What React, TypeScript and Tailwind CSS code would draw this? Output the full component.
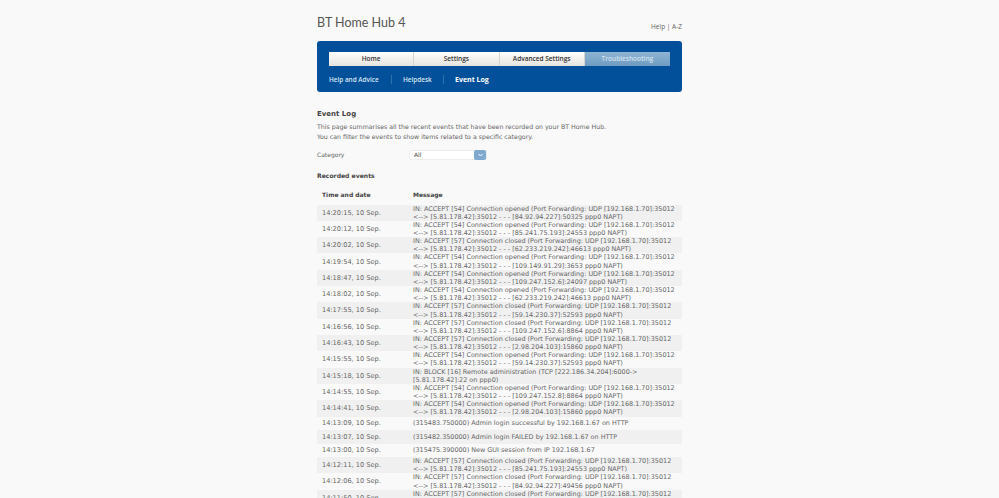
const FWD = "(Port Forwarding: UDP [192.168.1.70]:35012";

function conn(code: number, verb: string, tail: string) {
  return {
    l1: `IN: ACCEPT [${code}] Connection ${verb} ${FWD}`,
    l2: `<--> [5.81.178.42]:35012 - - - ${tail} ppp0 NAPT)`,
  };
}

const rows = [
  { t: "14:20:15, 10 Sep.", ...conn(54, "opened", "[84.92.94.227]:50325") },
  { t: "14:20:12, 10 Sep.", ...conn(54, "opened", "[85.241.75.193]:24553") },
  { t: "14:20:02, 10 Sep.", ...conn(57, "closed", "[62.233.219.242]:46613") },
  { t: "14:19:54, 10 Sep.", ...conn(54, "opened", "[109.149.91.29]:3653") },
  { t: "14:18:47, 10 Sep.", ...conn(54, "opened", "[109.247.152.6]:24097") },
  { t: "14:18:02, 10 Sep.", ...conn(54, "opened", "[62.233.219.242]:46613") },
  { t: "14:17:55, 10 Sep.", ...conn(57, "closed", "[59.14.230.37]:52593") },
  { t: "14:16:56, 10 Sep.", ...conn(57, "closed", "[109.247.152.6]:8864") },
  { t: "14:16:43, 10 Sep.", ...conn(57, "closed", "[2.98.204.103]:15860") },
  { t: "14:15:55, 10 Sep.", ...conn(54, "opened", "[59.14.230.37]:52593") },
  {
    t: "14:15:18, 10 Sep.",
    l1: "IN: BLOCK [16] Remote administration (TCP [222.186.34.204]:6000->",
    l2: "[5.81.178.42]:22 on ppp0)",
  },
  { t: "14:14:55, 10 Sep.", ...conn(54, "opened", "[109.247.152.8]:8864") },
  { t: "14:14:41, 10 Sep.", ...conn(54, "opened", "[2.98.204.103]:15860") },
  { t: "14:13:09, 10 Sep.", l1: "(315483.750000) Admin login successful by 192.168.1.67 on HTTP" },
  { t: "14:13:07, 10 Sep.", l1: "(315482.350000) Admin login FAILED by 192.168.1.67 on HTTP" },
  { t: "14:13:00, 10 Sep.", l1: "(315475.390000) New GUI session from IP 192.168.1.67" },
  { t: "14:12:11, 10 Sep.", ...conn(57, "closed", "[85.241.75.193]:24553") },
  { t: "14:12:06, 10 Sep.", ...conn(57, "closed", "[84.92.94.227]:49456") },
  { t: "14:11:50, 10 Sep.", ...conn(57, "closed", "[85.241.75.193]:24553") },
];

const tabs = ["Home", "Settings", "Advanced Settings"];

export default function App() {
  return (
    <div className="h-[498px] overflow-hidden bg-[#f9f9f9] font-['DejaVu_Sans',sans-serif] text-[#666]">
      <div className="mx-auto w-[365px]">
        {/* header */}
        <div className="flex h-[41px] justify-between">
          <h1 className="mt-[15px] font-['Lato',sans-serif] text-[12.5px] leading-[16px] text-[#555]">BT Home Hub 4</h1>
          <div className="mt-[22px] font-['Open_Sans',sans-serif] text-[6.5px] leading-[10px] text-[#666]">Help | A-Z</div>
        </div>

        {/* blue nav panel */}
        <div className="h-[51px] rounded-[3px] bg-[#03509a] pl-[12px] pr-[11px] pt-[11px]">
          <div className="flex h-[14px] w-[341px]">
            {tabs.map((tab) => (
              <div
                key={tab}
                className="flex w-[85.25px] items-center justify-center border-r border-[#d5d5d0] bg-gradient-to-b from-[#ffffff] to-[#e6e4de] font-['Open_Sans',sans-serif] text-[6.5px] font-semibold text-[#333]"
              >
                {tab}
              </div>
            ))}
            <div className="flex w-[85.25px] items-center justify-center bg-gradient-to-b from-[#8fb4d2] to-[#6f9cc2] font-['Open_Sans',sans-serif] text-[6.5px] font-semibold text-[#d5e3ee]">
              Troubleshooting
            </div>
          </div>
          <div className="mt-[9px] flex h-[9px] items-center font-['Open_Sans',sans-serif] text-[6.4px] font-semibold text-[#d8e6f2]">
            <span className="w-[50px] whitespace-nowrap">Help and Advice</span>
            <span className="mx-[11.5px] h-[9px] w-px bg-[#2f71ad]" />
            <span className="w-[28px] whitespace-nowrap">Helpdesk</span>
            <span className="mx-[11.5px] h-[9px] w-px bg-[#2f71ad]" />
            <span className="translate-y-[0.5px] text-[7px] font-bold text-white">Event Log</span>
          </div>
        </div>

        {/* intro */}
        <h2 className="mt-[16px] text-[7px] font-bold leading-[12px] text-[#444]">Event Log</h2>
        <p className="mt-[1.5px] whitespace-nowrap text-[6.25px] leading-[10.5px]">
          This page summarises all the recent events that have been recorded on your BT Home Hub.
        </p>
        <p className="whitespace-nowrap text-[6.25px] leading-[10.5px]">
          You can filter the events to show items related to a specific category.
        </p>

        {/* category select */}
        <div className="mt-[7px] flex h-[10px] items-center text-[6px]">
          <span className="w-[92px]">Category</span>
          <div className="flex h-[10px] w-[78px] items-center justify-between rounded-[2px] border border-[#ececec] bg-white pl-[4px] text-[#444]">
            <span>All</span>
            <span className="flex h-[10px] w-[12px] items-center justify-center rounded-[2px] bg-[#7fa9cf]">
              <svg width="5" height="4" viewBox="0 0 5 4">
                <path d="M0.5 1 L2.5 3 L4.5 1" fill="none" stroke="#fff" strokeWidth="1" />
              </svg>
            </span>
          </div>
        </div>

        <h3 className="mt-[11.5px] text-[6.1px] font-bold leading-[10px] text-[#444]">Recorded events</h3>

        {/* table head */}
        <div className="mt-[6.5px] flex h-[14px] items-center text-[6px] font-bold text-[#444]">
          <span className="w-[96px] pl-[5px]">Time and date</span>
          <span>Message</span>
        </div>

        {/* rows */}
        <div className="mt-[3px]">
          {rows.map((row, i) => (
            <div
              key={row.t}
              className={`flex items-center text-[6.45px] leading-[8.15px] ${i % 2 === 0 ? "bg-[#f0f0f0]" : "bg-[#f9f9f9]"} ${row.l2 ? "" : "h-[13.5px]"}`}
            >
              <span className="w-[96px] shrink-0 pl-[5px] text-[6.6px] whitespace-nowrap">{row.t}</span>
              <div className="whitespace-nowrap">
                <div>{row.l1}</div>
                {row.l2 && <div>{row.l2}</div>}
              </div>
            </div>
          ))}
        </div>
      </div>
    </div>
  );
}
